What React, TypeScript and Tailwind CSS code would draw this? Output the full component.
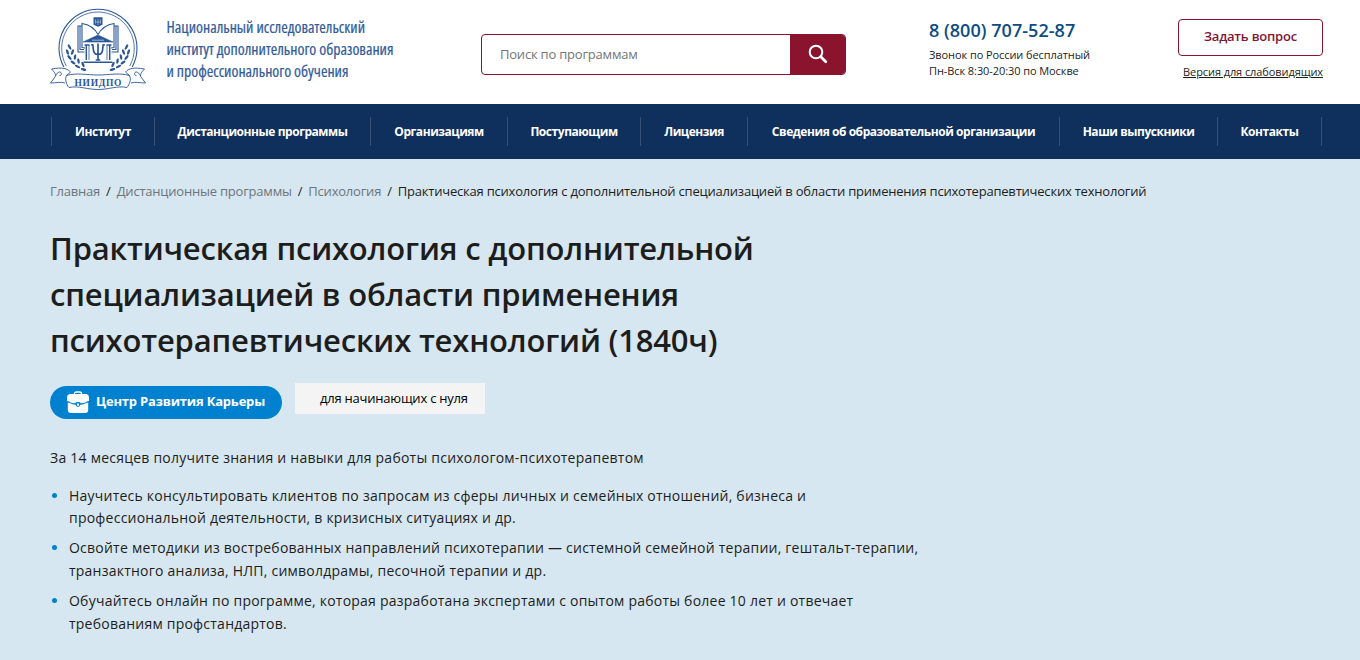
import React from "react";

const navItems = [
  { label: "Институт", box: "w-[103px]" },
  { label: "Дистанционные программы", box: "w-[216px]" },
  { label: "Организациям", box: "w-[137px]" },
  { label: "Поступающим", box: "w-[133px]" },
  { label: "Лицензия", box: "w-[107px]" },
  { label: "Сведения об образовательной организации", box: "w-[312px]" },
  { label: "Наши выпускники", box: "w-[158px]" },
  { label: "Контакты", box: "w-[104px]" },
];

const benefits = [
  [
    "Научитесь консультировать клиентов по запросам из сферы личных и семейных отношений, бизнеса и",
    "профессиональной деятельности, в кризисных ситуациях и др.",
  ],
  [
    "Освойте методики из востребованных направлений психотерапии — системной семейной терапии, гештальт-терапии,",
    "транзактного анализа, НЛП, символдрамы, песочной терапии и др.",
  ],
  [
    "Обучайтесь онлайн по программе, которая разработана экспертами с опытом работы более 10 лет и отвечает",
    "требованиям профстандартов.",
  ],
];

const leaves = [
  [29.5, 47, 60], [27.5, 52, 70], [32.5, 52, 110], [29.5, 57.5, 50], [35, 57, 100],
  [33, 62.5, 35], [38.5, 61, 80], [37.5, 66.5, 25], [43, 64.5, 65], [43.5, 69.5, 15],
];

function Logo() {
  return (
    <svg className="h-[84px] w-[96px] shrink-0" viewBox="50 8 96 84" fill="none" stroke="#2b5796">
      <path d="M63.8 67A39 39 0 1 1 132.2 67" strokeWidth="1.1" />
      <path d="M66.3 66A36.300 36.300 0 1 1 129.7 66" strokeWidth=".8" />
      <path d="M93.500 17.300h9v7.500l-4.500 2-4.500-2z" fill="#2b5796" stroke="none" />
      <path d="M95.500 19.500v4M98 19v6M100.500 19.500v4M95.500 22h5" stroke="#c9d6e8" strokeWidth=".6" />
      <path d="M98 34.500C94.500 28 89 24.500 82 23.500V47.500l3 .5M98 34.500c3.500-6.500 9-10 16-11V47.500l-3 .5" strokeWidth="1.100" />
      <path d="M82 26H78v26h6.500M114 26h4v26h-6.500M80 26.500v23h4M116 26.500v23h-4" strokeWidth="1.100" />
      <path d="m98 35-15 7h30z" fill="#2b5796" strokeWidth=".6" />
      <path d="M92 40.200h12" stroke="#dce5f0" strokeWidth=".7" />
      <path d="M84.500 45h5M106.500 45h5M86.300 45v15M109.700 45v15M83.500 62.200h29" strokeWidth="1.500" />
      <path d="M89 45v15M107 45v15" strokeWidth=".8" />
      <path d="M91.200 44.800h1.500c1 3-.5 9.700 5.300 9.700s4.300-6.700 5.300-9.700h1.500M98 43.500V60M95.700 60h4.600" strokeWidth="1.700" />
      <g fill="#2b5796" stroke="none">
        {leaves.map(([x, y, r], i) => (
          <g key={i}>
            <ellipse cx={x + 40} cy={y} rx="2.900" ry="1.200" transform={`rotate(${r} ${x + 40} ${y})`} />
            <ellipse cx={156 - x} cy={y} rx="2.900" ry="1.200" transform={`rotate(${-r} ${156 - x} ${y})`} />
          </g>
        ))}
      </g>
      <path d="M66.500 75.500c10-3 20-.5 31.500-.5s21-2.500 31.500.5c2 4 0 9-2.500 12-10-2-18 2-29 2s-19-4-29-2c-2.500-3-4.500-8-2.500-12z" fill="white" strokeWidth=".9" />
      <path d="M66.500 75.500l4-3.500c-3-3.500-8-5-19-3 3 3 5 6 3.500 8l-4.500 6c6 0 10-1.500 14.500 0M129.500 75.500l-4-3.500c3-3.500 8-5 19-3-3 3-5 6-3.500 8l4.500 6c-6 0-10-1.500-14.500 0M55.500 76c1-3 4-5 5.500-3.500 1 1.500 0 3.500-1.500 3M140.500 76c-1-3-4-5-5.500-3.500-1 1.500 0 3.500 1.500 3" strokeWidth=".9" />
      <text x="74.500" y="86" textLength="47" fill="#2b5796" stroke="none" className="font-['Liberation_Serif',serif] text-[9.500px] font-bold">НИИДПО</text>
    </svg>
  );
}

function SchoolName() {
  return (
    <svg className="ml-5 h-[70px] w-[232px] shrink-0 overflow-visible font-['Open_Sans',sans-serif] text-[15.500px] [font-stretch:75%]" viewBox="166 16 232 70" fill="#315c9a" stroke="#315c9a" strokeWidth=".2">
      <text x="166.500" y="32.500" textLength="198.500" lengthAdjust="spacingAndGlyphs">Национальный исследовательский</text>
      <text x="166.500" y="54.500" textLength="227" lengthAdjust="spacingAndGlyphs">институт дополнительного образования</text>
      <text x="166.500" y="76.500" textLength="182" lengthAdjust="spacingAndGlyphs">и профессионального обучения</text>
    </svg>
  );
}

export default function App() {
  return (
    <div className="h-[660px] w-[1360px] overflow-hidden bg-[#d7e7f1] font-['Open_Sans',sans-serif] whitespace-nowrap text-[#1d1d1b]">
      <header className="flex h-[104px] items-start bg-white pl-[50px]">
        <div className="flex w-[431px] pt-2">
          <Logo />
          <div className="pt-2"><SchoolName /></div>
        </div>
        <form className="mt-[34px] flex h-[41px] w-[365px] overflow-hidden rounded-[4px] border border-[#8a132e] bg-white">
          <input className="min-w-0 flex-1 pl-[18px] text-[13px] tracking-[-0.21px] outline-none placeholder:text-[#757575]" placeholder="Поиск по программам" />
          <button type="button" aria-label="Найти" className="flex w-[55px] items-center justify-center bg-[#8a132e] pb-0.5">
            <svg className="h-5 w-5" viewBox="0 0 20 20" fill="none" stroke="white">
              <circle cx="8" cy="8" r="6.300" strokeWidth="2" />
              <path d="m12.800 12.800 5 5" strokeWidth="2.700" strokeLinecap="round" />
            </svg>
          </button>
        </form>
        <div className="ml-[83px] w-[249px] pt-[18px]">
          <div className="text-[18px] leading-[25px] font-semibold tracking-[0.04px] text-[#0b4c83]">8 (800) 707-52-87</div>
          <div className="mt-1 text-[11px] leading-4 tracking-[-0.08px]">Звонок по России бесплатный<br />Пн-Вск 8:30-20:30 по Москве</div>
        </div>
        <div className="flex w-[145px] flex-col items-end pt-[19px]">
          <button type="button" className="h-[37px] w-full rounded-[4px] border border-[#8a132e] pb-0.5 text-[13px] font-semibold tracking-[-0.2px] text-[#7d1533]">Задать вопрос</button>
          <a className="mt-2 text-[11px] leading-4 tracking-[-0.09px] underline">Версия для слабовидящих</a>
        </div>
      </header>
      <nav className="flex h-[55px] items-center bg-[#0f2f5c] pl-[51px]">
        <div className="flex h-[29px] border-l border-[#365174]">
          {navItems.map((item) => (
            <a key={item.label} className={`flex items-center justify-center border-r border-[#365174] text-[12px] font-bold tracking-[-0.45px] text-white ${item.box}`}>{item.label}</a>
          ))}
        </div>
      </nav>
      <main className="pl-[50px]">
        <div className="flex pt-[22px] text-[13px] leading-5 tracking-[-0.21px] text-[#6c757a]">
          <a>Главная</a><span className="mx-[6px] text-[#1d1d1b]">/</span>
          <a>Дистанционные программы</a><span className="mx-[6px] text-[#1d1d1b]">/</span>
          <a>Психология</a><span className="mx-[6px] text-[#1d1d1b]">/</span>
          <span className="text-[#1d1d1b]">Практическая психология с дополнительной специализацией в области применения психотерапевтических технологий</span>
        </div>
        <h1 className="mt-6 text-[31px] leading-[46px] font-semibold tracking-[-0.19px]">Практическая психология с дополнительной<br />специализацией в области применения<br />психотерапевтических технологий (1840ч)</h1>
        <div className="mt-5 flex items-start gap-[13px]">
          <a className="mt-[3px] flex h-[33px] w-[232px] items-center rounded-full bg-[#0081cf] pb-0.5 pl-[17px] text-[13px] font-bold tracking-[-0.2px] text-white">
            <svg className="mr-[7px] h-[22px] w-[22px] shrink-0" viewBox="0 0 22 22" fill="white">
              <path d="M7.300 3.500Q7.300 1 9.500 1h3q2.200 0 2.200 2.500" fill="none" stroke="white" strokeWidth="1.300" />
              <path d="M3.500 3h15Q22 3 22 7v3c-2.500 0-4 2.500-8 2.300-1-1.600-5-1.600-6 0C4 12.500 2.500 10 0 10V7q0-4 3.500-4z" />
              <path d="M.8 11.500c3 .5 4.500 2.500 8 2.300.5 2.800 3.900 2.800 4.400 0 3.500.2 5-1.800 8-2.300V19q0 3-3 3H3.800q-3 0-3-3z" />
              <path d="M10 12.500h2v2.300h-2z" />
            </svg>
            Центр Развития Карьеры
          </a>
          <div className="flex h-[31px] w-[190px] items-center bg-[#f4f4f4] pl-[25px] text-[13px] tracking-[-0.22px] text-black">для начинающих с нуля</div>
        </div>
        <p className="mt-[28px] text-[14px] leading-[22.400px] tracking-[0.235px]">За 14 месяцев получите знания и навыки для работы психологом-психотерапевтом</p>
        <ul className="mt-[15.200px] flex flex-col gap-[7.400px] text-[14px] leading-[22.700px] tracking-[0.23px]">
          {benefits.map((lines) => (
            <li key={lines[0]} className="flex">
              <span className="mt-[8px] mr-[12px] ml-[2px] h-[5px] w-[5px] shrink-0 rounded-full bg-[#0081cf]" />
              <span>{lines[0]}<br />{lines[1]}</span>
            </li>
          ))}
        </ul>
      </main>
    </div>
  );
}
